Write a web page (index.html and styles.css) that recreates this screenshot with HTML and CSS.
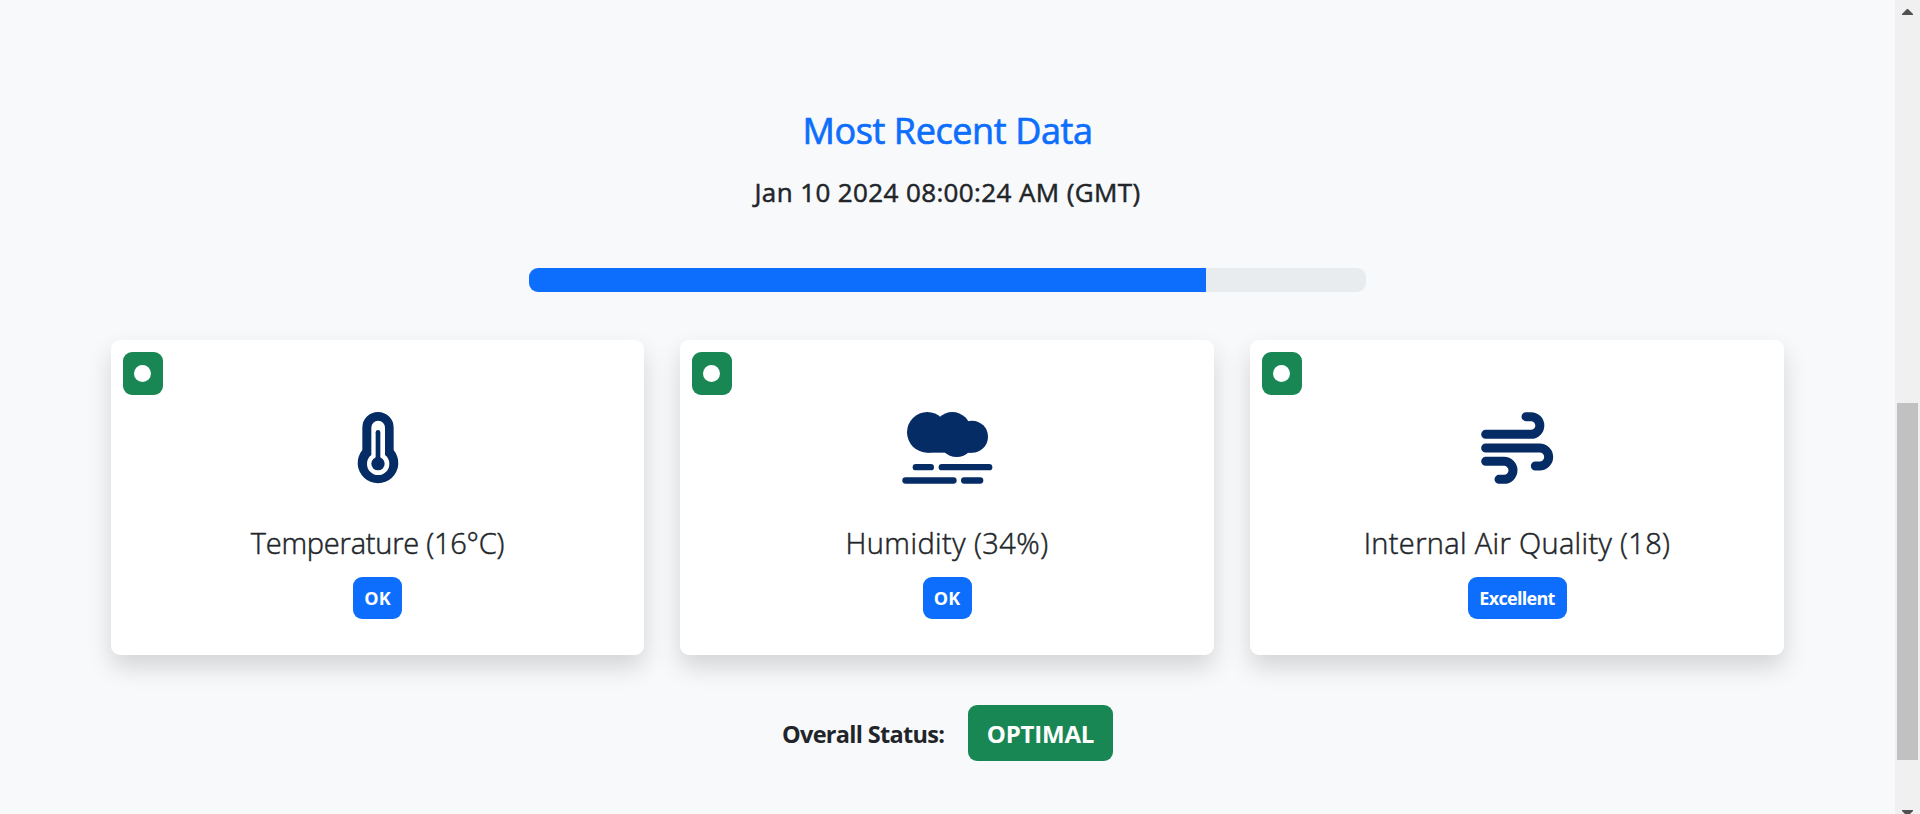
FILE: index.html
```html
<!DOCTYPE html>
<html lang="en">
<head>
<meta charset="utf-8">
<title>Most Recent Data</title>
<link rel="stylesheet" href="styles.css">
</head>
<body>
<main class="page">
  <h2 class="title">Most Recent Data</h2>
  <p class="date">Jan 10 2024 08:00:24 AM (GMT)</p>
  <div class="progress"><div class="progress-bar" style="width:80.900%"></div></div>
  <section class="cards">
    <article class="card">
      <span class="indicator"><span class="dot"></span></span>
      <svg class="icon" width="100" height="100" viewBox="0 0 300 300">
        <g transform="translate(38 0)" fill="#052c65">
          <path d="M65 83a47 47 0 0 1 94 0v67a61 61 0 1 1-94 0z"/>
          <path fill="#fff" d="M92 83a20.500 20.500 0 0 1 41 0v82a33.500 33.500 0 1 1-41 0z"/>
          <rect x="105" y="90" width="14" height="100" rx="7"/>
          <circle cx="112" cy="191" r="20"/>
        </g>
      </svg>
      <h3 class="name temp">Temperature (16°C)</h3>
      <span class="badge ok">OK</span>
    </article>
    <article class="card">
      <span class="indicator"><span class="dot"></span></span>
      <svg class="icon" width="120" height="100" viewBox="0 0 360 300">
        <g transform="translate(9 0)" fill="#052c65">
          <circle cx="112" cy="97" r="61"/>
          <circle cx="187" cy="91" r="55"/>
          <circle cx="246" cy="110" r="48"/>
          <circle cx="200" cy="117.500" r="53.500"/>
          <rect x="112" y="80" width="134" height="78"/>
          <rect x="68" y="192" width="64" height="19" rx="9.500"/>
          <rect x="146" y="192" width="161" height="19" rx="9.500"/>
          <rect x="37" y="232" width="163" height="19" rx="9.500"/>
          <rect x="213" y="232" width="67" height="19" rx="9.500"/>
        </g>
      </svg>
      <h3 class="name hum">Humidity (34%)</h3>
      <span class="badge ok">OK</span>
    </article>
    <article class="card">
      <span class="indicator"><span class="dot"></span></span>
      <svg class="icon" width="100" height="100" viewBox="0 0 300 300">
        <g transform="translate(8 0)" fill="none" stroke="#052c65" stroke-width="27" stroke-linecap="round">
          <path d="M48 103H184a26.500 26.500 0 0 0 0-53H169"/>
          <path d="M48 144H210a27 27 0 0 1 0 54H197"/>
          <path d="M48 184H103a27 27 0 0 1 0 54H88"/>
        </g>
      </svg>
      <h3 class="name air">Internal Air Quality (18)</h3>
      <span class="badge excellent">Excellent</span>
    </article>
  </section>
  <div class="overall">
    <span class="overall-label">Overall Status:</span>
    <span class="overall-badge">OPTIMAL</span>
  </div>
</main>
<aside class="scrollbar">
  <svg class="arrow" width="11" height="6" viewBox="0 0 11 6"><path fill="#505050" d="M5 0h1l5 5v1H0V5z"/></svg>
  <div class="thumb"></div>
  <svg class="arrow-down" width="11" height="6" viewBox="0 0 11 6"><path fill="#505050" d="M0 0h11v1L6 6H5L0 1z"/></svg>
</aside>
</body>
</html>
```
FILE: styles.css
```css
* { box-sizing: border-box; }
body {
  margin: 0;
  height: 814px;
  display: flex;
  overflow: hidden;
  background: #f8f9fb;
  color: #212529;
  font-family: "Open Sans", "Noto Sans", sans-serif;
  white-space: nowrap;
}
.page {
  width: 1895px;
  padding: 109px 111px 0;
  display: flex;
  flex-direction: column;
  align-items: center;
}
.title {
  margin: 0;
  font-size: 36px;
  line-height: 44px;
  font-weight: 400;
  letter-spacing: -.4px;
  color: #0d6efd;
  -webkit-text-stroke: .7px #0d6efd;
}
.date {
  margin: 23px 0 0;
  font-size: 26px;
  line-height: 32px;
  font-weight: 400;
  letter-spacing: .38px;
  -webkit-text-stroke: .5px #212529;
}
.progress {
  width: 837px;
  height: 24px;
  margin-top: 60px;
  border-radius: 9px;
  background: #e9ecef;
  overflow: hidden;
}
.progress-bar { height: 100%; background: #0d6efd; }
.cards {
  width: 100%;
  margin-top: 48px;
  display: grid;
  grid-template-columns: 533px 534px 534px;
  gap: 36px;
}
.card {
  position: relative;
  height: 315px;
  padding-top: 60px;
  display: flex;
  flex-direction: column;
  align-items: center;
  background: #fff;
  border-radius: 9px;
  box-shadow: 0 12px 24px rgba(0, 0, 0, .15);
}
.indicator {
  position: absolute;
  top: 12px;
  left: 12px;
  width: 39.5px;
  height: 43px;
  border-radius: 9px;
  background: #198754;
  display: flex;
  align-items: center;
  justify-content: center;
}
.dot { width: 17px; height: 17px; border-radius: 50%; background: #fff; }
.icon { display: block; }
.name {
  margin: 25px 0 0;
  font-size: 29px;
  line-height: 36px;
  font-weight: 300;
  -webkit-text-stroke: .5px #212529;
}
.temp { letter-spacing: -.22px; }
.hum { letter-spacing: .45px; }
.air { letter-spacing: .35px; }
.badge {
  width: 49px;
  height: 42px;
  margin-top: 16px;
  border-radius: 9px;
  background: #0d6efd;
  color: #fff;
  font-size: 18px;
  line-height: 42px;
  font-weight: 700;
  text-align: center;
}
.excellent { width: 99px; letter-spacing: -.7px; }
.overall { margin-top: 50px; display: flex; align-items: center; gap: 24px; }
.overall-label {
  width: 162px;
  font-size: 23.5px;
  line-height: 54px;
  padding-top: 2px;
  font-weight: 700;
  letter-spacing: -.7px;
}
.overall-badge {
  width: 145px;
  padding-top: 2px;
  border-radius: 9px;
  background: #198754;
  color: #fff;
  font-size: 24px;
  line-height: 54px;
  font-weight: 700;
  letter-spacing: -.2px;
  text-align: center;
}
.scrollbar {
  width: 25px;
  height: 814px;
  background: #f0f0f0;
  display: flex;
  flex-direction: column;
  align-items: center;
  padding-top: 9px;
  overflow: hidden;
}
.arrow, .arrow-down { flex: none; }
.thumb { flex: none; width: 21px; height: 357px; margin: 388px 0 50px; background: #c1c1c1; }
```
